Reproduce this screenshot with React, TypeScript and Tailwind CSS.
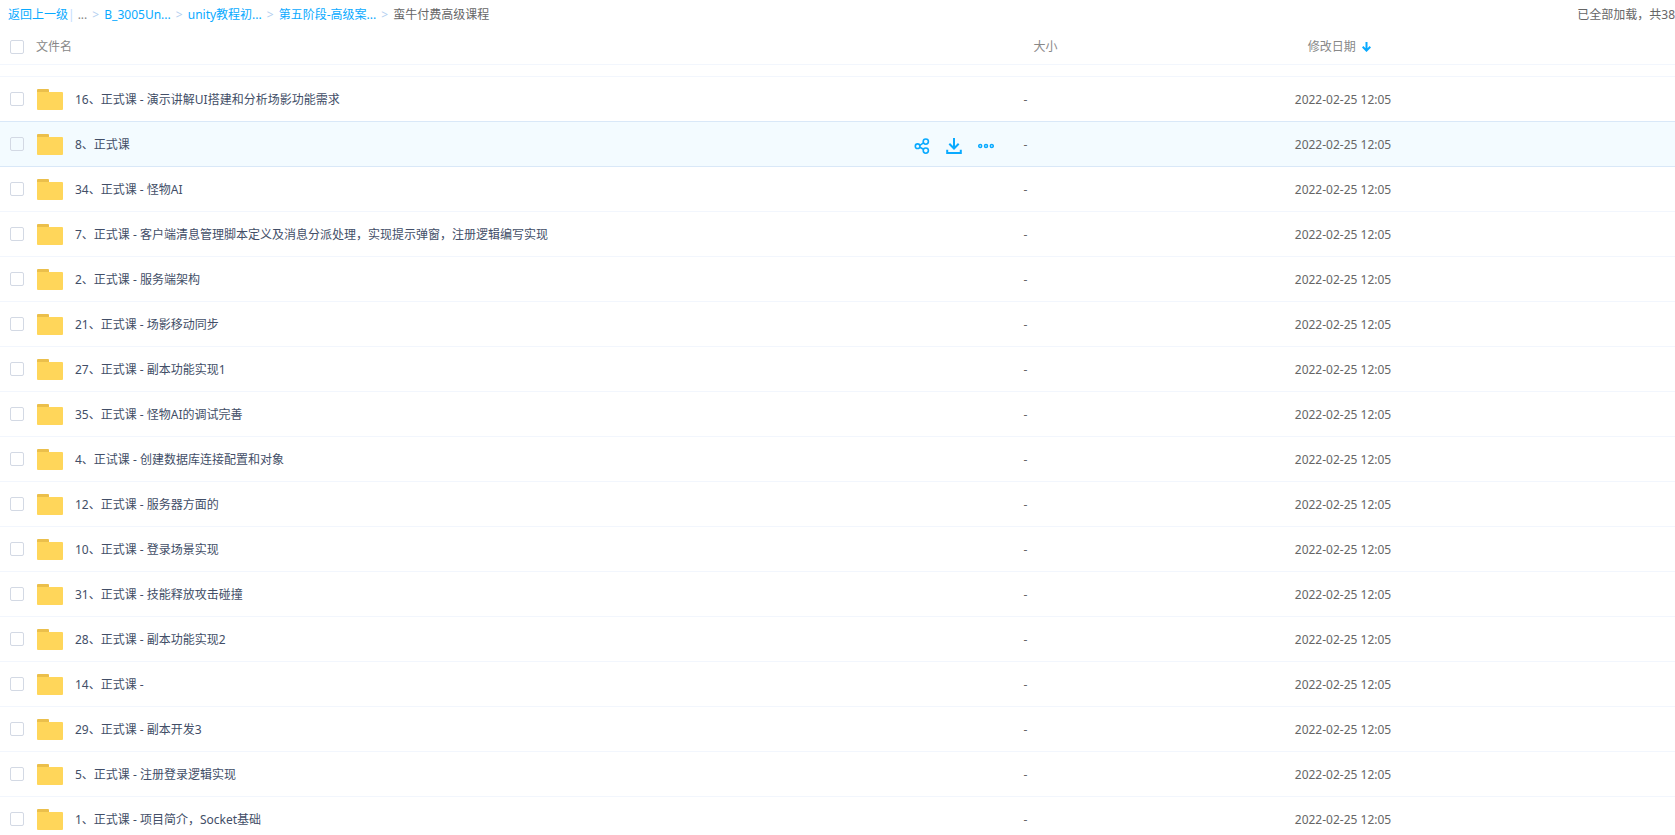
const files = [
  '16、正式课 - 演示讲解UI搭建和分析场影功能需求',
  '8、正式课',
  '34、正式课 - 怪物AI',
  '7、正式课 - 客户端清息管理脚本定义及消息分派处理，实现提示弹窗，注册逻辑编写实现',
  '2、正式课 - 服务端架构',
  '21、正式课 - 场影移动同步',
  '27、正式课 - 副本功能实现1',
  '35、正式课 - 怪物AI的调试完善',
  '4、正试课 - 创建数据库连接配置和对象',
  '12、正式课 - 服务器方面的',
  '10、正式课 - 登录场景实现',
  '31、正式课 - 技能释放攻击碰撞',
  '28、正式课 - 副本功能实现2',
  '14、正式课 -',
  '29、正式课 - 副本开发3',
  '5、正式课 - 注册登录逻辑实现',
  '1、正式课 - 项目简介，Socket基础',
];

const activeIndex = 1;
const modified = '2022-02-25 12:05';

function Checkbox({ label }: { label: string }) {
  return (
    <input
      type="checkbox"
      aria-label={label}
      className="block size-3.5 shrink-0 appearance-none rounded-xs border border-[#d3d9e4] checked:border-[#09aaff] checked:bg-[#09aaff]"
    />
  );
}

function FolderIcon() {
  return (
    <svg width="26" height="21" viewBox="0 0 26 21" className="shrink-0" aria-hidden="true">
      <path d="M1 0h10Q12 0 12 1V6H0V1Q0 0 1 0Z" fill="#ebbf4b" />
      <path d="M0 3h25Q26 3 26 4v16q0 1-1 1H1Q0 21 0 20Z" fill="#ffd65a" />
    </svg>
  );
}

function ShareIcon() {
  return (
    <svg width="16" height="16" viewBox="0 0 16 16" fill="none" stroke="#09aaff" strokeWidth="1.6" aria-hidden="true">
      <circle cx="3.6" cy="8.2" r="2.3" />
      <circle cx="11.8" cy="3.6" r="2.6" />
      <circle cx="11.8" cy="12.6" r="2.6" />
      <path d="M5.8 7.3 9.5 4.9M5.8 9.2l3.700 2" />
    </svg>
  );
}

function DownloadIcon() {
  return (
    <svg width="16" height="16" viewBox="0 0 16 16" fill="none" stroke="#09aaff" strokeWidth="2" aria-hidden="true">
      <path d="M8 0v10.500M3.300 5.800 8 10.500l4.700-4.700" />
      <path d="M1.200 11.800V15h13.600v-3.200" />
    </svg>
  );
}

function MoreIcon() {
  return (
    <svg width="16" height="16" viewBox="0 0 16 16" fill="none" stroke="#09aaff" strokeWidth="1.5" aria-hidden="true">
      <circle cx="2.2" cy="8" r="1.5" />
      <circle cx="8" cy="8" r="1.5" />
      <circle cx="13.8" cy="8" r="1.5" />
    </svg>
  );
}

function Separator() {
  return <span className="w-[17px] text-center text-[#b4d0f0]">&gt;</span>;
}

function Breadcrumb() {
  return (
    <nav className="flex items-center whitespace-nowrap text-[#09aaff]">
      <a href="#back">返回上一级</a>
      <span className="mr-[3px] text-[#c4dbfe]">|</span>
      <span className="text-[#888]">...</span>
      <Separator />
      <a href="#course">B_3005Un...</a>
      <Separator />
      <a href="#unity">unity教程初...</a>
      <Separator />
      <a href="#stage">第五阶段-高级案...</a>
      <Separator />
      <span className="text-[#666]">蛮牛付费高级课程</span>
    </nav>
  );
}

export default function App() {
  return (
    <div className="flex h-screen flex-col overflow-hidden bg-white font-['Noto_Sans','Noto_Sans_CJK_SC',sans-serif] text-xs text-[#666]">
      <header className="flex h-[30px] shrink-0 items-center justify-between pl-2">
        <Breadcrumb />
        <span className="whitespace-nowrap">已全部加载，共38</span>
      </header>
      <main className="min-h-0 flex-1 overflow-hidden">
        <table className="w-full table-fixed border-separate border-spacing-0 text-left">
          <colgroup>
            <col className="w-[61.1%]" />
            <col className="w-[16.2%]" />
            <col />
          </colgroup>
          <thead>
            <tr className="h-[35px] text-[#888]">
              <th className="border-b border-[#f2f6fd] p-0 pl-2.5 font-normal">
                <div className="flex items-center gap-3">
                  <Checkbox label="全选" />
                  <span className="pb-px">文件名</span>
                </div>
              </th>
              <th className="border-b border-[#f2f6fd] p-0 pb-px pl-2.5 font-normal">大小</th>
              <th className="border-b border-[#f2f6fd] p-0 pb-px pl-[13px] font-normal">
                <button type="button" className="flex items-center gap-1.5">
                  修改日期
                  <svg width="9" height="10" viewBox="0 0 9 10" fill="none" stroke="#09aaff" strokeWidth="2" aria-hidden="true">
                    <path d="M4.500 0v8.500M.700 4.700l3.800 3.900 3.800-3.900" />
                  </svg>
                </button>
              </th>
            </tr>
          </thead>
          <tbody>
            <tr className="h-3">
              <td colSpan={3} className="border-b border-[#f2f6fd] p-0" />
            </tr>
            {files.map((name, i) => {
              const active = i === activeIndex;
              const line = active || i === activeIndex - 1 ? 'border-[#d9e8f8]' : 'border-[#f2f6fd]';
              return (
                <tr key={name} className={active ? 'h-[45px] bg-[#f3fbff]' : 'h-[45px]'}>
                  <td className={`border-b p-0 pl-2.5 ${line}`}>
                    <div className="flex items-center">
                      <Checkbox label={name} />
                      <a href="#folder" className="ml-[13px] flex items-center gap-3 whitespace-nowrap text-[#424e67]">
                        <FolderIcon />
                        <span className="pt-0.5">{name}</span>
                      </a>
                      {active && (
                        <div className="mr-[29px] ml-auto flex gap-4 pt-1">
                          <button type="button" aria-label="分享"><ShareIcon /></button>
                          <button type="button" aria-label="下载"><DownloadIcon /></button>
                          <button type="button" aria-label="更多"><MoreIcon /></button>
                        </div>
                      )}
                    </div>
                  </td>
                  <td className={`border-b p-0 pt-0.5 ${line}`}>-</td>
                  <td className={`border-b p-0 pt-0.5 ${line}`}>{modified}</td>
                </tr>
              );
            })}
          </tbody>
        </table>
      </main>
    </div>
  );
}
